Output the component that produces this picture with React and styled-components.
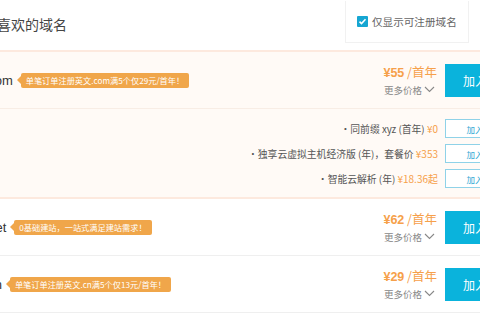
import React from 'react'
import styled, { createGlobalStyle } from 'styled-components'

const GlobalStyle = createGlobalStyle`
  html, body {
    margin: 0;
    padding: 0;
    background: #fff;
  }
  body {
    width: 480px;
    height: 320px;
    overflow: hidden;
    font-family: "Liberation Sans", "Noto Sans CJK SC", sans-serif;
  }
`

const domains = [
  {
    name: 'mysite.com',
    tag: '单笔订单注册英文.com满5个仅29元/首年！',
    price: '55',
    open: true,
    extras: [
      { text: '•同前缀 xyz (首年)', price: '¥0' },
      { text: '•独享云虚拟主机经济版 (年)，套餐价', price: '¥353' },
      { text: '•智能云解析 (年)', price: '¥18.36起' },
    ],
  },
  { name: 'mysite.net', tag: '0基础建站，一站式满足建站需求！', price: '62' },
  { name: 'mysite.cn', tag: '单笔订单注册英文.cn满5个仅13元/首年！', price: '29' },
]

const Chevron = () => (
  <svg width="11" height="7" viewBox="0 0 11 7" fill="none">
    <path d="M1 1l4.5 4.5L10 1" stroke="#888" strokeWidth="1.1" />
  </svg>
)

const App = () => {
  return (
    <>
      <GlobalStyle />
      <Panel>
        <Header>
          <Title>选择您喜欢的域名</Title>
          <Filter>
            <Check>
              <svg width="9" height="9" viewBox="0 0 9 9" fill="none">
                <path d="M1.5 4.6l2 2 4-4.4" stroke="#fff" strokeWidth="1.5" />
              </svg>
            </Check>
            仅显示可注册域名
          </Filter>
        </Header>

        {domains.map((d) => (
          <Item key={d.name} open={d.open}>
            <Row>
              <Left>
                <Domain>{d.name}</Domain>
                <Tag>{d.tag}</Tag>
              </Left>
              <PriceBox>
                <Price>
                  <b>¥{d.price}</b> /首年
                </Price>
                <More>
                  更多价格 <Chevron />
                </More>
              </PriceBox>
              <AddButton>加入</AddButton>
            </Row>
            {d.extras && (
              <Extras>
                {d.extras.map((e) => (
                  <ExtraRow key={e.text}>
                    <ExtraText>
                      {e.text} <em>{e.price}</em>
                    </ExtraText>
                    <SmallButton>加入</SmallButton>
                  </ExtraRow>
                ))}
              </Extras>
            )}
          </Item>
        ))}
      </Panel>
    </>
  )
}

const Panel = styled.div`
  width: 590px;
  margin-left: -65px;
`

const Header = styled.div`
  display: flex;
  align-items: center;
  justify-content: space-between;
  padding: 0 56px 0 20px;
  border-bottom: 2px solid #fde9de;
  box-sizing: border-box;
  height: 52px;
`

const Title = styled.div`
  font-size: 14px;
  color: #444;
  font-family: "Noto Sans CJK SC", sans-serif;
  margin-top: -2px;
`

const Filter = styled.div`
  width: 124px;
  height: 42px;
  box-sizing: border-box;
  border: 1px solid #f1f1f1;
  border-top: none;
  display: flex;
  align-items: center;
  gap: 4px;
  padding-left: 11px;
  margin-top: -6px;
  font-size: 10.6px;
  color: #666;
  font-family: "Noto Sans CJK SC", sans-serif;
`

const Check = styled.span`
  width: 11px;
  height: 11px;
  border-radius: 1px;
  background: #16a6d2;
  display: flex;
  align-items: center;
  justify-content: center;
`

const Item = styled.div`
  background: ${(p) => (p.open ? '#fffaf6' : '#fff')};
  border-bottom: ${(p) => (p.open ? '2px solid #fde9de' : '1px solid #efefef')};
`

const Row = styled.div`
  height: 56px;
  display: flex;
  align-items: center;
  padding: 0 20px 0 12px;
`

const Left = styled.div`
  flex: 1;
  display: flex;
  align-items: center;
  gap: 8px;
`

const Domain = styled.span`
  font-size: 13px;
  color: #333;
`

const Tag = styled.span`
  position: relative;
  background: #f0a64a;
  color: #fff;
  font-size: 8.2px;
  line-height: 15px;
  height: 15px;
  padding: 0 5px;
  border-radius: 2px;
  font-family: "Noto Sans CJK SC", sans-serif;
  white-space: nowrap;

  &::before {
    content: '';
    position: absolute;
    left: -4px;
    top: 3.5px;
    border-top: 4px solid transparent;
    border-bottom: 4px solid transparent;
    border-right: 4px solid #f0a64a;
  }
`

const PriceBox = styled.div`
  display: flex;
  flex-direction: column;
  align-items: flex-end;
  margin-right: 8px;
  font-family: "Noto Sans CJK SC", sans-serif;
`

const Price = styled.div`
  font-size: 12.5px;
  line-height: 17px;
  color: #f6a04a;

  b {
    font-family: "Liberation Sans", sans-serif;
    font-weight: 700;
    font-size: 12.5px;
  }
`

const More = styled.div`
  font-size: 9.5px;
  line-height: 16px;
  color: #888;
  display: flex;
  align-items: center;
  gap: 2px;
  margin-right: 2px;
`

const AddButton = styled.button`
  width: 60px;
  height: 33px;
  border: none;
  background: #0ab3dc;
  color: #fff;
  font-size: 12px;
  font-family: "Noto Sans CJK SC", sans-serif;
  padding: 0;
`

const Extras = styled.div`
  border-top: 1px solid #f8ede5;
  padding: 10px 20px 9px 0;
  display: flex;
  flex-direction: column;
  gap: 6px;
`

const ExtraRow = styled.div`
  display: flex;
  justify-content: flex-end;
  align-items: center;
  gap: 7px;
`

const ExtraText = styled.span`
  font-size: 9.8px;
  color: #555;
  font-family: "Noto Sans CJK SC", sans-serif;

  em {
    font-style: normal;
    color: #f6a04a;
    font-size: 10px;
  }
`

const SmallButton = styled.button`
  width: 60px;
  height: 19px;
  box-sizing: border-box;
  border: 1px solid #8fd2e8;
  background: #fff;
  color: #33a9d4;
  font-size: 8.5px;
  font-family: "Noto Sans CJK SC", sans-serif;
  padding: 0;
`

export default App
